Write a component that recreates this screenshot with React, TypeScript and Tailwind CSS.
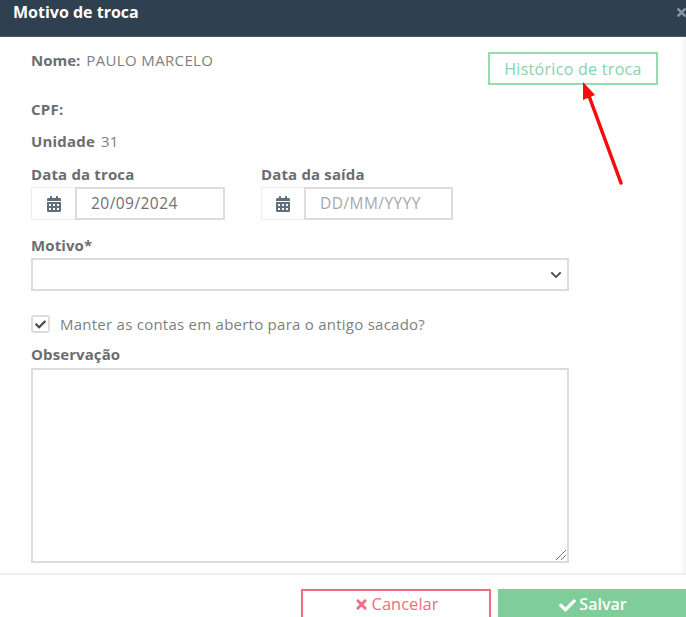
import { FaCalendarAlt, FaCheck, FaTimes, FaChevronDown } from "react-icons/fa";

const font = { fontFamily: '"Open Sans", sans-serif' };

function DateField({ label, value, placeholder, width, iconWidth, inputWidth }: { label: string; value?: string; placeholder?: string; width: string; iconWidth: string; inputWidth: string }) {
  return (
    <div className={`flex flex-col ${width}`}>
      <div className="h-[25px] pt-[4px] text-[15px] leading-[17px] font-bold tracking-[0.15px] text-[#6b6d6f]">{label}</div>
      <div className="flex h-[33px] items-stretch">
        <div className={`flex items-center justify-center border border-r-0 border-[#ececec] bg-white text-[#5f6f7c] ${iconWidth}`}>
          <FaCalendarAlt className="text-[16px]" />
        </div>
        <div className={`flex items-center border-2 border-[#dcdcdc] pl-[14px] text-[15.5px] tracking-[0.45px] ${inputWidth} ${value ? "text-[#6f7173]" : "text-[#a8a8a8]"}`}>
          {value ?? placeholder}
        </div>
      </div>
    </div>
  );
}

export default function App() {
  return (
    <div className="relative flex h-[617px] w-[686px] flex-col overflow-hidden bg-white" style={font}>
      <div className="flex h-[37px] shrink-0 items-center justify-between border-b border-[#4b5a68] bg-[#2f4050] pb-[12px] pl-[13px]">
        <span className="text-[16px] font-bold text-white">Motivo de troca</span>
        <FaTimes className="mr-[-2px] text-[13px] text-[#8b95a0]" />
      </div>

      <div className="flex flex-1 flex-col border-r-[3px] border-[#f5f5f5] pl-[31px]">
        <div className="flex h-[60px] items-start justify-between pr-[25px]">
          <div className="mt-[15px] flex gap-[6px] text-[15px] leading-[17px] text-[#7d7f81]">
            <span className="font-bold text-[#6b6d6f]">Nome:</span>
            <span className="tracking-[0.35px]">PAULO MARCELO</span>
          </div>
          <button className="mt-[15px] flex h-[33px] w-[170px] items-center justify-center border-2 border-[#93dcab] text-[16px] tracking-[0.3px] text-[#86d3ad]">
            Histórico de troca
          </button>
        </div>

        <div className="h-[32px] pt-[4px] text-[15px] leading-[17px] font-bold tracking-[0.3px] text-[#6b6d6f]">CPF:</div>

        <div className="flex h-[33px] gap-[6px] pt-[4px] text-[15px] leading-[17px] text-[#7d7f81]">
          <span className="font-bold tracking-[0.2px] text-[#6b6d6f]">Unidade</span>
          <span>31</span>
        </div>

        <div className="flex">
          <DateField label="Data da troca" value="20/09/2024" width="w-[230px]" iconWidth="w-[44px]" inputWidth="w-[150px]" />
          <DateField label="Data da saída" placeholder="DD/MM/YYYY" width="w-[192px]" iconWidth="w-[43px]" inputWidth="w-[149px]" />
        </div>

        <div className="mt-[17px] h-[21px] text-[15px] leading-[17px] font-bold tracking-[0.1px] text-[#6b6d6f]">Motivo*</div>
        <div className="flex h-[33px] w-[538px] items-center justify-end border-2 border-[#dcdcdc] pr-[5px]">
          <FaChevronDown className="text-[12px] text-[#4b5560]" />
        </div>

        <div className="mt-[23px] flex h-[20px] items-center gap-[10px]">
          <div className="flex h-[18px] w-[19px] items-center justify-center rounded-[3px] border-2 border-[#dddddd] text-[#3f4a54]">
            <FaCheck className="text-[11px]" />
          </div>
          <span className="text-[15px] tracking-[0.25px] text-[#7d7f81]">Manter as contas em aberto para o antigo sacado?</span>
        </div>

        <div className="mt-[12px] h-[22px] text-[15px] leading-[17px] font-bold tracking-[0.1px] text-[#6b6d6f]">Observação</div>
        <div className="relative h-[195px] w-[538px] border-2 border-[#dcdcdc]">
          <svg className="absolute bottom-0 right-0" width="12" height="12" viewBox="0 0 12 12" fill="none" stroke="#777" strokeWidth="1">
            <path d="M1 11 L11 1" />
            <path d="M6 11 L11 6" />
          </svg>
        </div>
      </div>

      <div className="flex h-[44px] shrink-0 items-start gap-[7px] border-t-2 border-[#eeeeee] pl-[301px] pt-[14px]">
        <button className="flex h-[40px] w-[190px] shrink-0 items-start justify-center gap-[3px] border-2 border-[#f16c7f] pt-[1px] text-[16.5px] text-[#f16c7f]">
          <FaTimes className="mt-[5px] text-[15px]" />
          Cancelar
        </button>
        <button className="flex h-[40px] w-[190px] shrink-0 items-start justify-center gap-[3px] bg-[#7fcd99] pt-[3px] text-[16px] font-semibold text-white">
          <FaCheck className="mt-[5px] text-[17px]" />
          Salvar
        </button>
      </div>

      <svg className="absolute left-[574px] top-[78px]" width="55" height="110" viewBox="0 0 55 110" fill="none">
        <path d="M47 105 L15 18" stroke="#fa0a0a" strokeWidth="3.5" strokeLinecap="round" />
        <path d="M9 4 L21 17 L9 22 Z" fill="#fa0a0a" />
      </svg>
    </div>
  );
}
